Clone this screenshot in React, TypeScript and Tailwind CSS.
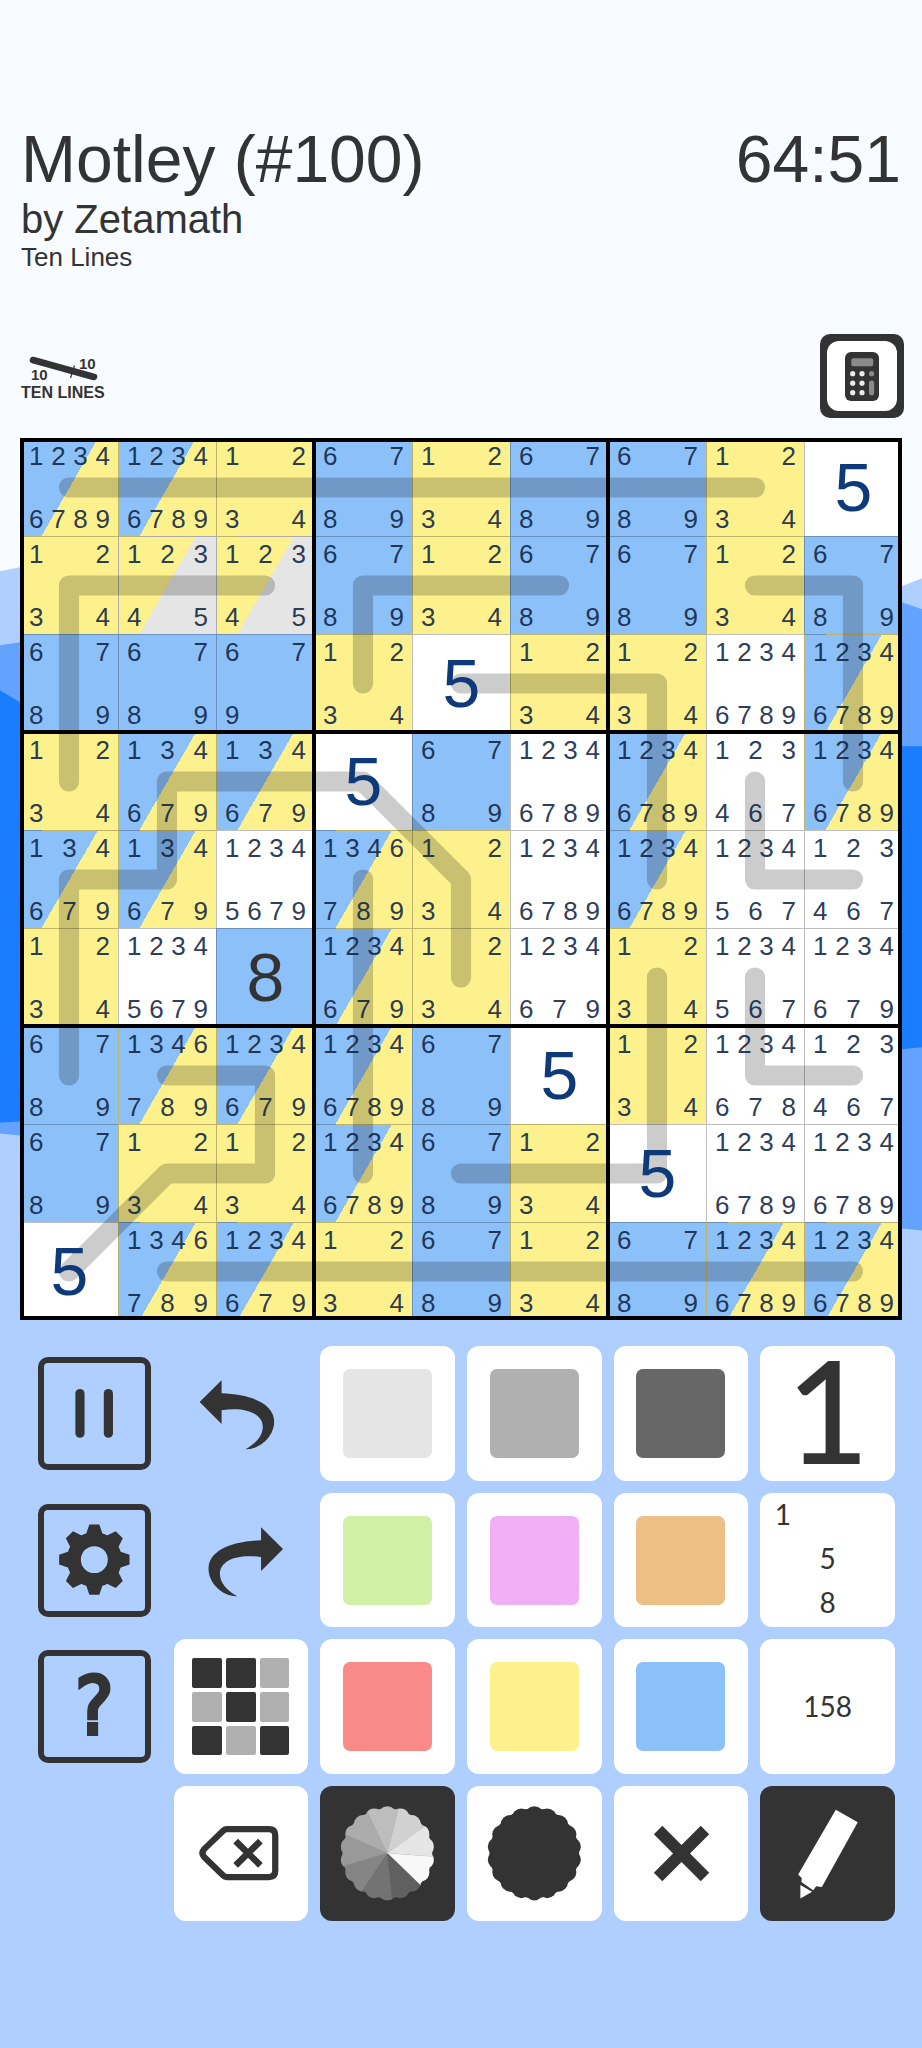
import type { ReactNode } from "react";

const INK = "#333333";

/* ---------- board data ---------- */

type Tint = "w" | "b" | "y" | "s" | "g";

const tints: Record<Tint, string> = {
  w: "bg-white",
  b: "bg-[#8cc0f9]",
  y: "bg-[#fcf18d]",
  s: "bg-[linear-gradient(120deg,#8cc0f9_50%,#fcf18d_50%)]",
  g: "bg-[linear-gradient(120deg,#fcf18d_50%,#e5e5e5_50%)]",
};

// Tint letter, then either one digit or "top/bottom" pencil marks.
const board: string[] = [
  "s1234/6789 s1234/6789 y12/34 b67/89 y12/34 b67/89 b67/89 y12/34 w5",
  "y12/34 g123/45 g123/45 b67/89 y12/34 b67/89 b67/89 y12/34 b67/89",
  "b67/89 b67/89 b67/9 y12/34 w5 y12/34 y12/34 w1234/6789 s1234/6789",
  "y12/34 s134/679 s134/679 w5 b67/89 w1234/6789 s1234/6789 w123/467 s1234/6789",
  "s134/679 s134/679 w1234/5679 s1346/789 y12/34 w1234/6789 s1234/6789 w1234/567 w123/467",
  "y12/34 w1234/5679 b8 s1234/679 y12/34 w1234/679 y12/34 w1234/567 w1234/679",
  "b67/89 s1346/789 s1234/679 s1234/6789 b67/89 w5 y12/34 w1234/678 w123/467",
  "b67/89 y12/34 y12/34 s1234/6789 b67/89 y12/34 w5 w1234/6789 w1234/6789",
  "w5 s1346/789 s1234/679 y12/34 b67/89 y12/34 b67/89 s1234/6789 s1234/6789",
];

// Each ten line as [column, row] stops.
const tenLines: [number, number][][] = [
  [[0, 0], [7, 0]],
  [[2, 1], [0, 1], [0, 3]],
  [[3, 2], [3, 1], [5, 1]],
  [[7, 1], [8, 1], [8, 3]],
  [[4, 2], [6, 2], [6, 4]],
  [[0, 6], [0, 4], [1, 4], [1, 3], [3, 3], [4, 4], [4, 5]],
  [[3, 4], [3, 7]],
  [[7, 3], [7, 4], [8, 4]],
  [[7, 5], [7, 6], [8, 6]],
  [[6, 5], [6, 7], [4, 7]],
  [[1, 6], [2, 6], [2, 7], [1, 7], [0, 8]],
  [[1, 8], [8, 8]],
];

function Marks({ digits }: { digits: string }) {
  return (
    <span className="flex justify-between">
      {digits.split("").map((d) => (
        <span key={d}>{d}</span>
      ))}
    </span>
  );
}

function Cell({ code }: { code: string }) {
  const tint = tints[code[0] as Tint];
  const value = code.slice(1);
  const [top, bottom] = value.split("/");
  return (
    <button type="button" className={`aspect-square border-t border-l border-black/25 ${tint}`}>
      {bottom ? (
        <span className="relative z-20 flex h-full flex-col justify-between px-2 py-1 text-[26px] leading-[26px] text-[#0f2444]/90">
          <Marks digits={top} />
          <Marks digits={bottom} />
        </span>
      ) : (
        <span
          className={`relative z-20 flex h-full items-center justify-center pb-0.5 text-[68px] leading-none ${
            value === "8" ? "text-[#333333]" : "text-[#0f3a7a]"
          }`}
        >
          {value}
        </span>
      )}
    </button>
  );
}

function Board() {
  return (
    <section className="relative isolate mx-5 mt-5" aria-label="Puzzle">
      <div className="grid grid-cols-9">
        {board.flatMap((row, r) => row.split(" ").map((code, c) => <Cell key={`${r}-${c}`} code={code} />))}
      </div>
      <svg viewBox="0 0 9 9" className="pointer-events-none absolute inset-0 z-10 h-full w-full" aria-hidden="true">
        {tenLines.map((stops, i) => (
          <polyline
            key={i}
            points={stops.map(([c, r]) => `${c + 0.5},${r + 0.505}`).join(" ")}
            fill="none"
            stroke="#000"
            strokeOpacity="0.2"
            strokeWidth="0.206"
            strokeLinecap="round"
            strokeLinejoin="round"
          />
        ))}
      </svg>
      <div className="pointer-events-none absolute inset-0 z-30 grid grid-cols-3 outline-4 -outline-offset-4 outline-black">
        {Array.from({ length: 9 }, (_, i) => (
          <div key={i} className="border-2 border-black" />
        ))}
      </div>
    </section>
  );
}

/* ---------- header ---------- */

function TenLinesLogo() {
  return (
    <svg
      viewBox="0 0 88 44"
      className="h-[44px] w-[88px] overflow-visible font-['Liberation_Sans',Arial,sans-serif] font-bold"
      fill={INK}
    >
      <path d="M13 6 L74 23" stroke={INK} strokeWidth="6.5" strokeLinecap="round" />
      <path d="M54.5 11.5 L50.5 24" stroke={INK} strokeWidth="1.2" />
      <text x="11" y="26" fontSize="15">10</text>
      <text x="59" y="15" fontSize="15">10</text>
      <text x="1" y="44" fontSize="16">TEN LINES</text>
    </svg>
  );
}

function CalculatorIcon() {
  return (
    <svg viewBox="0 0 34 49" className="h-[49px] w-[34px]" aria-hidden="true">
      <rect width="34" height="49" rx="6" fill={INK} />
      <rect x="6.3" y="6.3" width="22" height="8" rx="2" fill="#8a8a8a" />
      {[21.7, 31.2, 40.7].map((y) => (
        <g key={y} fill="#ececec">
          <circle cx="7.7" cy={y} r="2.6" />
          <circle cx="17" cy={y} r="2.6" />
        </g>
      ))}
      <circle cx="26.6" cy="21.7" r="2.6" fill="#8a8a8a" />
      <rect x="24" y="28.6" width="5.2" height="14.7" rx="2.6" fill="#8a8a8a" />
    </svg>
  );
}

function Header() {
  return (
    <header className="pt-[123px] text-[#333333]">
      <div className="px-[21px]">
        <div className="flex items-center justify-between text-[66px] leading-[72px]">
          <h1>Motley (#100)</h1>
          <time>64:51</time>
        </div>
        <p className="text-[40px] leading-[48px]">by Zetamath</p>
        <p className="text-[26px] leading-[28px]">Ten Lines</p>
      </div>
      <div className="mt-[63px] flex items-center justify-between pr-[18px] pl-5">
        <TenLinesLogo />
        <button
          type="button"
          aria-label="Calculator"
          className="flex size-[84px] rounded-[10px] bg-[#333333] p-[7px]"
        >
          <span className="flex flex-1 items-center justify-center self-stretch rounded-xl bg-white">
            <CalculatorIcon />
          </span>
        </button>
      </div>
    </header>
  );
}

/* ---------- keypad icons, all drawn on a 135-unit tile ---------- */

function Icon({ children }: { children: ReactNode }) {
  return (
    <svg viewBox="0 0 135 135" className="h-full w-full" fill={INK} aria-hidden="true">
      {children}
    </svg>
  );
}

const arrowPath =
  "M25.7 56.2 L47.7 34.4 V47.4 C78 48.5 100.4 58 100.4 76 C100.4 92 84 104.5 71.7 103.4 C82 98 89 90 89 81 C89 67 70 60.5 47.7 64.4 V78.3 Z";

const bumps = Array.from({ length: 18 }, (_, i) => {
  const a = ((i * 20 + 10) * Math.PI) / 180;
  return { x: 67.5 + 37.6 * Math.cos(a), y: 67.5 + 37.6 * Math.sin(a) };
});

const scallop = [
  <circle key="core" cx="67.5" cy="67.5" r="45" />,
  ...bumps.map((b, i) => <circle key={i} cx={b.x} cy={b.y} r="9.6" />),
];

const greys = ["#f8f8f8", "#606060", "#737373", "#858585", "#999999", "#acacac", "#bdbdbd", "#d1d1d1", "#e5e5e5"];

function wedge(i: number) {
  const point = (deg: number) => {
    const t = (deg * Math.PI) / 180;
    return `${67.5 + 70 * Math.cos(t)} ${67.5 + 70 * Math.sin(t)}`;
  };
  return `M67.5 67.5 L${point(4 + i * 40)} L${point(44 + i * 40)} Z`;
}

/* ---------- keypad ---------- */

function Key({ label, dark, bare, children }: { label: string; dark?: boolean; bare?: boolean; children: ReactNode }) {
  const look = bare ? "" : dark ? "bg-[#333333]" : "bg-white";
  return (
    <button
      type="button"
      aria-label={label}
      className={`flex aspect-square items-center justify-center rounded-xl font-['Lato',sans-serif] ${look}`}
    >
      {children}
    </button>
  );
}

function Framed({ label, children }: { label: string; children: ReactNode }) {
  return (
    <button type="button" aria-label={label} className="grid aspect-square grid-cols-1 grid-rows-1 place-items-center">
      <span className="col-start-1 row-start-1 size-[113px] rounded-[10px] border-[6px] border-[#333333]" />
      <span className="col-start-1 row-start-1 flex h-full w-full items-center justify-center">{children}</span>
    </button>
  );
}

function Swatch({ label, color }: { label: string; color: string }) {
  return (
    <Key label={label}>
      <span className={`size-[89px] rounded-[7px] ${color}`} />
    </Key>
  );
}

const D = "bg-[#333333]";
const L = "bg-[#b0b0b0]";
const pattern = [D, D, L, L, D, L, D, L, D];

function Keypad() {
  return (
    <section className="grid grid-cols-6 gap-3 px-[27px] pt-[26px] pb-32" aria-label="Keypad">
      <Framed label="Pause">
        <Icon>
          <rect x="48.5" y="43" width="9.2" height="49" rx="4.6" />
          <rect x="77" y="43" width="9.2" height="49" rx="4.6" />
        </Icon>
      </Framed>
      <Key label="Undo" bare>
        <Icon>
          <path d={arrowPath} />
        </Icon>
      </Key>
      <Swatch label="Light grey" color="bg-[#e5e5e5]" />
      <Swatch label="Grey" color="bg-[#b0b0b0]" />
      <Swatch label="Dark grey" color="bg-[#676767]" />
      <Key label="Digit">
        <span className="-mt-2 text-[144px] leading-[120px] font-medium text-[#333333]">1</span>
      </Key>

      <Framed label="Settings">
        <Icon>
          <g transform="translate(67.5 66.8)">
            <circle r="20.5" fill="none" stroke={INK} strokeWidth="14" />
            {[0, 45, 90, 135, 180, 225, 270, 315].map((a) => (
              <path key={a} d="M-5 -35.3 H5 L8.5 -25 H-8.5 Z" transform={`rotate(${a})`} />
            ))}
          </g>
        </Icon>
      </Framed>
      <Key label="Redo" bare>
        <Icon>
          <path d={arrowPath} transform="translate(135 0) scale(-1 1)" />
        </Icon>
      </Key>
      <Swatch label="Green" color="bg-[#d1efa5]" />
      <Swatch label="Pink" color="bg-[#f1b0f6]" />
      <Swatch label="Orange" color="bg-[#eebf84]" />
      <Key label="Corner marks">
        <span className="grid h-full w-full grid-cols-3 grid-rows-3 place-items-center pb-1 text-[28px] leading-[28px] text-[#333333]">
          <span>1</span>
          <span className="col-start-2 row-start-2">5</span>
          <span className="col-start-2 row-start-3">8</span>
        </span>
      </Key>

      <Framed label="Help">
        <span className="font-['DejaVu_Sans_Condensed','Roboto',sans-serif] text-[80px] leading-none text-[#333333] [-webkit-text-stroke:4px_#333333]">
          ?
        </span>
      </Framed>
      <Key label="Select pattern">
        <span className="grid size-[97px] grid-cols-3 gap-1">
          {pattern.map((shade, i) => (
            <span key={i} className={`rounded-[2px] ${shade}`} />
          ))}
        </span>
      </Key>
      <Swatch label="Red" color="bg-[#f98a87]" />
      <Swatch label="Yellow" color="bg-[#fcf18d]" />
      <Swatch label="Blue" color="bg-[#8cc0f9]" />
      <Key label="Centre marks">
        <span className="pb-0.5 text-[28px] leading-none text-[#333333]">158</span>
      </Key>

      <div />
      <Key label="Delete">
        <Icon>
          <g fill="none" stroke={INK}>
            <path
              d="M53 43.2 H95 Q101.5 43.2 101.5 49.5 V85 Q101.5 91.3 95 91.3 H53 Q51 91.3 49.3 89.7 L30.5 71.5 Q26.5 67.3 30.5 63 L49.3 44.8 Q51 43.2 53 43.2 Z"
              strokeWidth="6.3"
            />
            <path d="M61.8 55.3 L86.6 79.5 M86.6 55.3 L61.8 79.5" strokeWidth="6.6" />
          </g>
        </Icon>
      </Key>
      <Key label="Colours" dark>
        <Icon>
          <clipPath id="wheel-edge">{scallop}</clipPath>
          <g clipPath="url(#wheel-edge)">
            {greys.map((shade, i) => (
              <path key={i} d={wedge(i)} fill={shade} stroke={shade} strokeWidth="0.4" />
            ))}
          </g>
        </Icon>
      </Key>
      <Key label="Solid colour">
        <Icon>{scallop}</Icon>
      </Key>
      <Key label="Cross">
        <Icon>
          <path d="M44.2 44.2 L91.2 91.2 M91.2 44.2 L44.2 91.2" stroke={INK} strokeWidth="12" />
        </Icon>
      </Key>
      <Key label="Pen" dark>
        <Icon>
          <g fill="#ffffff">
            <path d="M76 23.7 L98 36.4 L62 101.2 L56.3 100.4 L53.3 104.6 L41.5 96.3 L41.8 92.1 L38.3 88.6 Z" />
            <path d="M40.5 99.2 L52.2 106 L40.5 112.7 Z" />
          </g>
        </Icon>
      </Key>
    </section>
  );
}

/* ---------- page ---------- */

function Waves() {
  return (
    <svg
      viewBox="0 0 922 2048"
      preserveAspectRatio="none"
      className="absolute inset-0 -z-10 h-full w-full"
      aria-hidden="true"
    >
      <path d="M0 571 L20 567 L461 640 L902 586 L922 578 V2048 H0 Z" fill="#aecfff" />
      <path d="M0 645 L20 642 L460 760 L902 602 L922 609 V1230 L902 1228 L460 1190 L20 1135 L0 1133 Z" fill="#63a3ff" />
      <path d="M0 690 L20 702 L460 800 L902 746 H922 V1047 L902 1049 L460 1080 L20 1121 L0 1122 Z" fill="#1a7cff" />
    </svg>
  );
}

export default function App() {
  return (
    <main className="relative isolate min-h-screen overflow-hidden bg-[#f8fbff] font-['Liberation_Sans',Arial,sans-serif]">
      <Waves />
      <Header />
      <Board />
      <Keypad />
    </main>
  );
}
